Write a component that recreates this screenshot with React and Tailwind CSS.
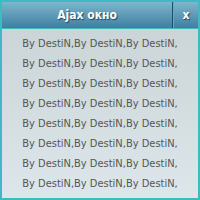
import React from "react";

export default function App() {
  const lines = Array.from({ length: 8 });
  return (
    <div className="w-[200px] h-[200px] bg-[#3fbac2] p-[2px] flex flex-col font-['DejaVu_Sans_Condensed','DejaVu_Sans',sans-serif]">
      <div className="h-[26px] flex bg-gradient-to-b from-[#80b5cc] to-[#3b80a3]">
        <div className="flex-1 flex items-center justify-center text-white font-bold text-[12px] [text-shadow:1px_1px_1px_#1d4a60]">
          Ajax окно
        </div>
        <div className="w-[1px] bg-[#18506c]" />
        <div className="w-[25px] flex items-center justify-center text-white font-bold text-[12px] [text-shadow:1px_1px_1px_#1d4a60] border-l border-[#6aa7c2]">
          x
        </div>
      </div>
      <div className="h-[1px] bg-[#3fbac2]" />
      <div className="flex-1 bg-gradient-to-b from-[#cbd4d6] to-[#dde7eb] flex flex-col items-center pt-[5px]">
        {lines.map((_, i) => (
          <div key={i} className="h-[20px] leading-[20px] text-[11px] text-[#555]">
            By DestiN,By DestiN,By DestiN,
          </div>
        ))}
      </div>
    </div>
  );
}
